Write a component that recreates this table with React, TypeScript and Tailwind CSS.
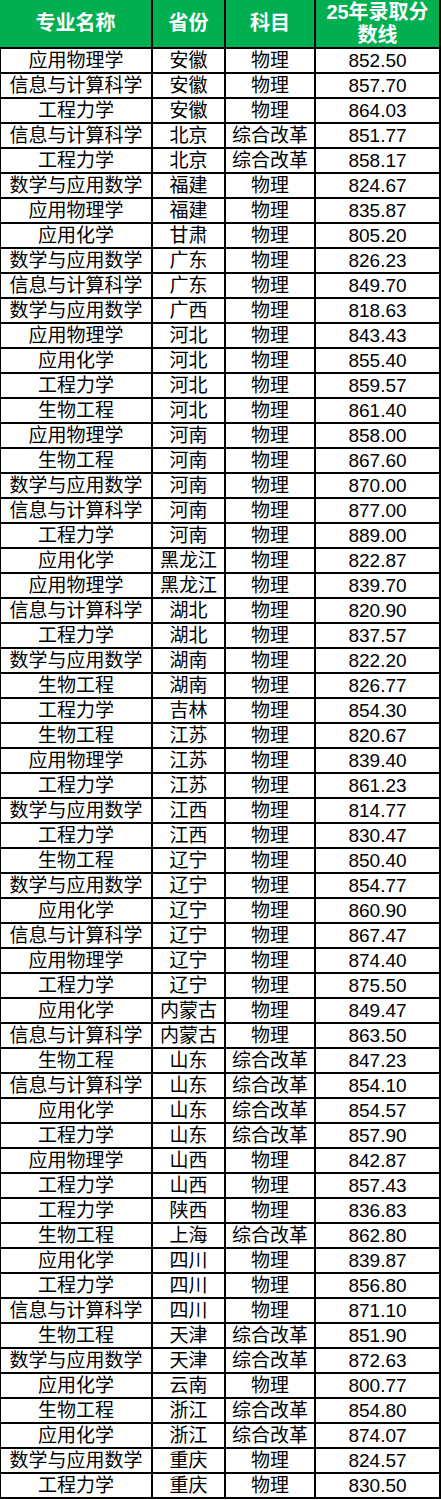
const rows: [string, string, string, string][] = [
  ['应用物理学', '安徽', '物理', '852.50'],
  ['信息与计算科学', '安徽', '物理', '857.70'],
  ['工程力学', '安徽', '物理', '864.03'],
  ['信息与计算科学', '北京', '综合改革', '851.77'],
  ['工程力学', '北京', '综合改革', '858.17'],
  ['数学与应用数学', '福建', '物理', '824.67'],
  ['应用物理学', '福建', '物理', '835.87'],
  ['应用化学', '甘肃', '物理', '805.20'],
  ['数学与应用数学', '广东', '物理', '826.23'],
  ['信息与计算科学', '广东', '物理', '849.70'],
  ['数学与应用数学', '广西', '物理', '818.63'],
  ['应用物理学', '河北', '物理', '843.43'],
  ['应用化学', '河北', '物理', '855.40'],
  ['工程力学', '河北', '物理', '859.57'],
  ['生物工程', '河北', '物理', '861.40'],
  ['应用物理学', '河南', '物理', '858.00'],
  ['生物工程', '河南', '物理', '867.60'],
  ['数学与应用数学', '河南', '物理', '870.00'],
  ['信息与计算科学', '河南', '物理', '877.00'],
  ['工程力学', '河南', '物理', '889.00'],
  ['应用化学', '黑龙江', '物理', '822.87'],
  ['应用物理学', '黑龙江', '物理', '839.70'],
  ['信息与计算科学', '湖北', '物理', '820.90'],
  ['工程力学', '湖北', '物理', '837.57'],
  ['数学与应用数学', '湖南', '物理', '822.20'],
  ['生物工程', '湖南', '物理', '826.77'],
  ['工程力学', '吉林', '物理', '854.30'],
  ['生物工程', '江苏', '物理', '820.67'],
  ['应用物理学', '江苏', '物理', '839.40'],
  ['工程力学', '江苏', '物理', '861.23'],
  ['数学与应用数学', '江西', '物理', '814.77'],
  ['工程力学', '江西', '物理', '830.47'],
  ['生物工程', '辽宁', '物理', '850.40'],
  ['数学与应用数学', '辽宁', '物理', '854.77'],
  ['应用化学', '辽宁', '物理', '860.90'],
  ['信息与计算科学', '辽宁', '物理', '867.47'],
  ['应用物理学', '辽宁', '物理', '874.40'],
  ['工程力学', '辽宁', '物理', '875.50'],
  ['应用化学', '内蒙古', '物理', '849.47'],
  ['信息与计算科学', '内蒙古', '物理', '863.50'],
  ['生物工程', '山东', '综合改革', '847.23'],
  ['信息与计算科学', '山东', '综合改革', '854.10'],
  ['应用化学', '山东', '综合改革', '854.57'],
  ['工程力学', '山东', '综合改革', '857.90'],
  ['应用物理学', '山西', '物理', '842.87'],
  ['工程力学', '山西', '物理', '857.43'],
  ['工程力学', '陕西', '物理', '836.83'],
  ['生物工程', '上海', '综合改革', '862.80'],
  ['应用化学', '四川', '物理', '839.87'],
  ['工程力学', '四川', '物理', '856.80'],
  ['信息与计算科学', '四川', '物理', '871.10'],
  ['生物工程', '天津', '综合改革', '851.90'],
  ['数学与应用数学', '天津', '综合改革', '872.63'],
  ['应用化学', '云南', '物理', '800.77'],
  ['生物工程', '浙江', '综合改革', '854.80'],
  ['应用化学', '浙江', '综合改革', '874.07'],
  ['数学与应用数学', '重庆', '物理', '824.57'],
  ['工程力学', '重庆', '物理', '830.50'],
]

const headCell =
  'flex h-[49px] items-center justify-center border-r-2 border-b-2 border-black bg-[#00b050] text-center text-[20px] font-bold leading-[23px] text-white'
const cell =
  'flex h-[25px] items-center justify-center whitespace-nowrap border-r-2 border-b-2 border-black text-[19px] leading-none text-black'

const App = () => {
  return (
    <div className="w-[441px] bg-white font-['Liberation_Sans','Noto_Sans_CJK_SC',sans-serif]">
      <div className="grid grid-cols-[153px_73px_90px_125px]">
        <div className={headCell}>专业名称</div>
        <div className={headCell}>省份</div>
        <div className={headCell}>科目</div>
        <div className={headCell}>
          25年录取分
          <br />
          数线
        </div>
        {rows.map((r, i) => (
          <div key={i} className="contents">
            <div className={`${cell} border-l`}>{r[0]}</div>
            <div className={cell}>{r[1]}</div>
            <div className={cell}>{r[2]}</div>
            <div className={cell}>{r[3]}</div>
          </div>
        ))}
      </div>
    </div>
  )
}

export default App
